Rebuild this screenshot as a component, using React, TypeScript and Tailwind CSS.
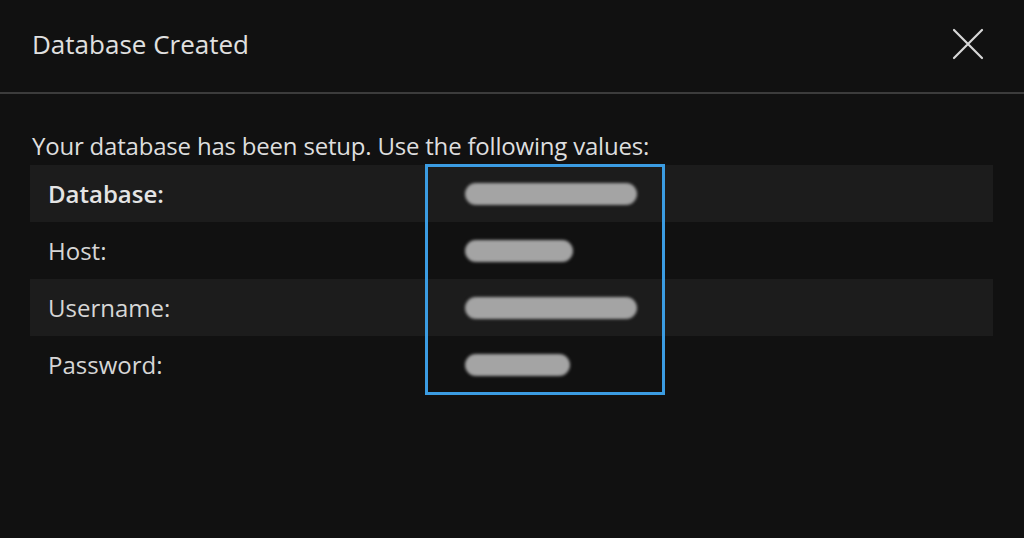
import React from 'react';

const rows = [
  { label: 'Database:', bold: true, shade: true, w: 'w-[172px]' },
  { label: 'Host:', bold: false, shade: false, w: 'w-[108px]' },
  { label: 'Username:', bold: false, shade: true, w: 'w-[172px]' },
  { label: 'Password:', bold: false, shade: false, w: 'w-[105px]' },
];

const App: React.FC = () => {
  return (
    <div className="w-[1024px] h-[538px] bg-[#111111] text-[#dcdcdc] font-['Open_Sans',sans-serif] overflow-hidden">
      <div className="h-[92px] flex items-center justify-between pl-8 pr-[40px] pb-1">
        <h1 className="text-[26px] text-[#e0e0e0]">Database Created</h1>
        <svg width="32" height="32" viewBox="0 0 32 32" className="text-[#d8d8d8]">
          <path d="M2 2 L30 30 M30 2 L2 30" stroke="currentColor" strokeWidth="2.2" strokeLinecap="round" />
        </svg>
      </div>
      <div className="h-[2px] bg-[#3c3c3c]" />
      <div className="pl-8 pr-[31px] pt-[39px]">
        <p className="text-[24px] leading-[26px] text-[#dedede] tracking-[-0.2px]">
          Your database has been setup. Use the following values:
        </p>
        <div className="relative -ml-[2px] mt-[6px]">
          {rows.map((r) => (
            <div
              key={r.label}
              className={`h-[57px] flex items-center ${r.shade ? 'bg-[#1c1c1c]' : ''}`}
            >
              <span className={`w-[435px] pl-[18px] text-[24px] ${r.bold ? 'font-semibold text-[#e4e4e4]' : 'text-[#d6d6d6]'}`}>
                {r.label}
              </span>
              <span className={`block h-[22px] ${r.w} rounded-full bg-[#a4a4a4] blur-[1.5px]`} />
            </div>
          ))}
          <div className="absolute left-[395px] -top-[1px] w-[240px] h-[231px] border-[3px] border-[#3b9ce2]" />
        </div>
      </div>
    </div>
  );
};

export default App;
